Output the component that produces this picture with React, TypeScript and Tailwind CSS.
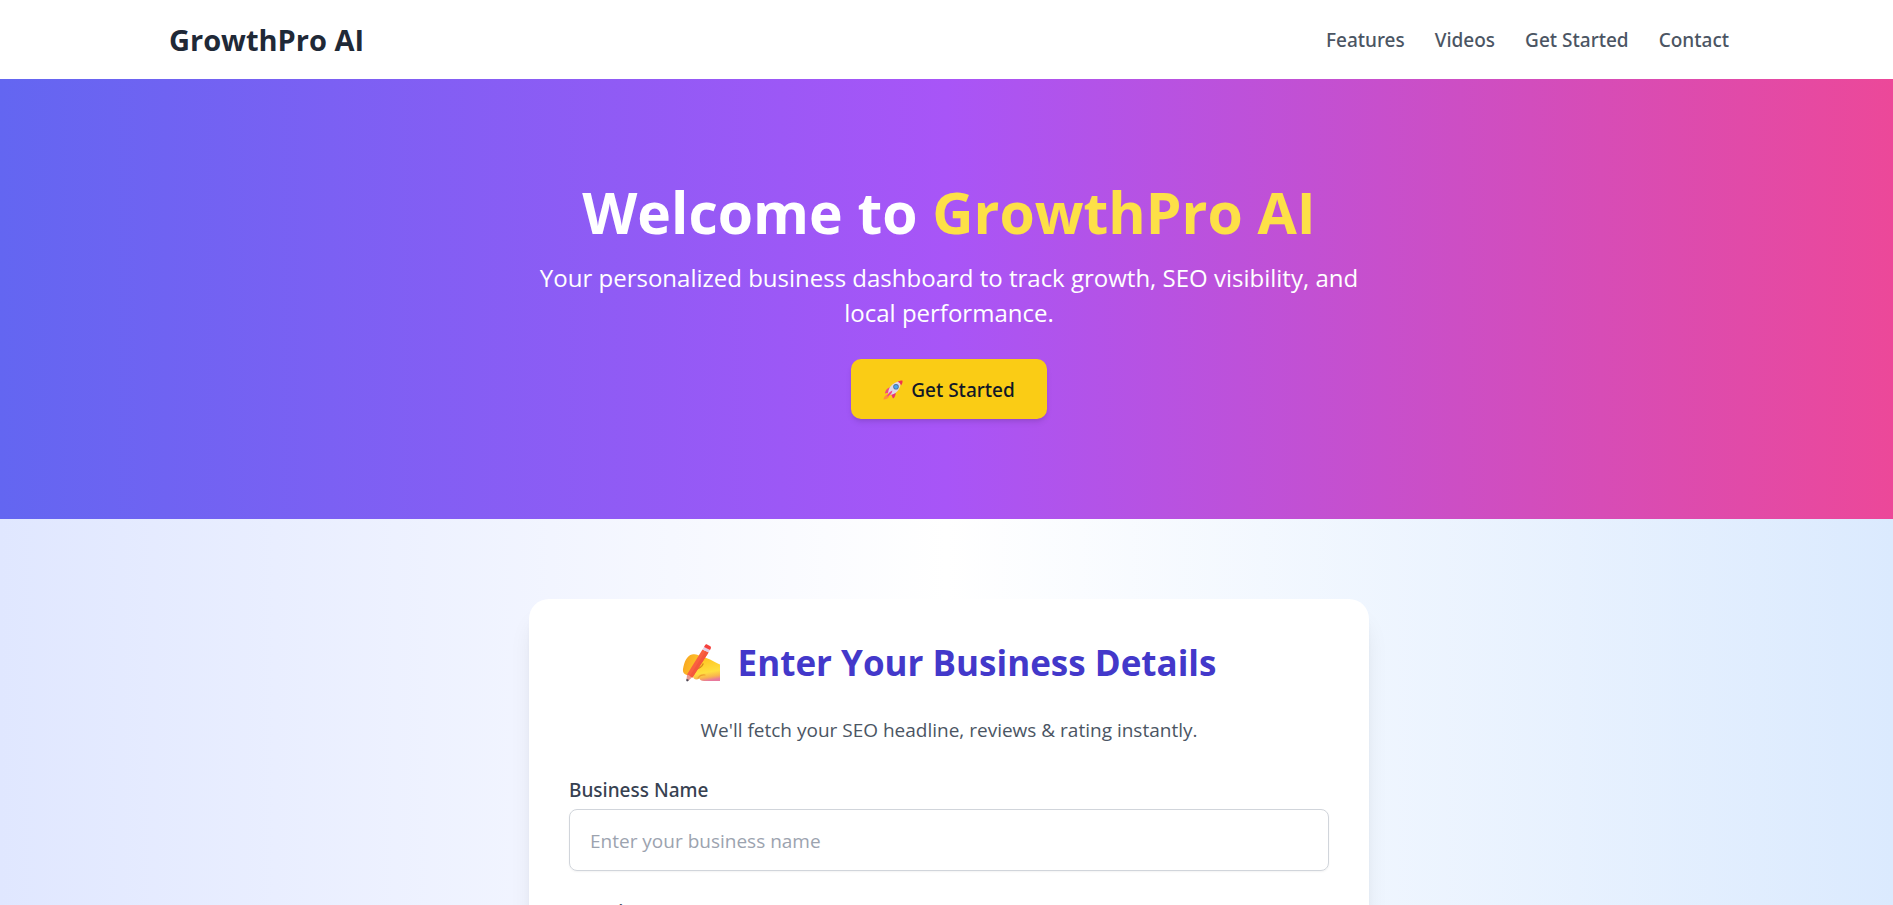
function Rocket() {
  return (
    <svg viewBox="0 0 20 20" className="h-5 w-5" aria-hidden="true">
      <path d="M4.2 14.4 C2.2 15 1 17 .4 19.4 C3 19.4 5.4 18.4 6.2 16.2z" fill="#ff8f3d" />
      <path d="M7.6 7.6 C4.6 7.6 2.4 10 2 13.4 L6.2 12.4z" fill="#ef4a7c" />
      <path d="M12.6 12.2 C13 15.2 11.4 17.8 10 18.6 L8 14z" fill="#e8336d" />
      <path d="M5.2 15 C4.4 9 8.4 2.6 17.6 1 C18.4 9.4 12.4 15.4 5.2 15z" fill="#ddd9e6" />
      <path d="M14.6 1.8 C16 .9 18 .3 19.4 .5 C19.9 2 19.2 4 18 5.4 C17.4 3.6 16.2 2.4 14.6 1.8z" fill="#f0324f" />
      <path d="M9.4 10.4 C7 11.4 4.8 13.6 3.8 16.6 C6.8 15.6 9 13.6 9.4 10.4z" fill="#f0468a" />
      <circle cx="13" cy="6.8" r="2.8" fill="#4e6fa0" />
      <circle cx="13" cy="6.8" r="1.9" fill="#4aa8f0" />
    </svg>
  );
}

function WritingHand() {
  return (
    <svg viewBox="0 0 38 38" className="h-[38px] w-[38px]" aria-hidden="true">
      <defs>
        <linearGradient id="palm" x1="0.3" y1="0" x2="0.5" y2="1">
          <stop offset="0" stopColor="#ffc21f" />
          <stop offset="0.65" stopColor="#ffdf3f" />
          <stop offset="0.85" stopColor="#f9b64e" />
          <stop offset="1" stopColor="#e8799c" />
        </linearGradient>
        <linearGradient id="finger" x1="0" y1="0" x2="1" y2="0.4">
          <stop offset="0" stopColor="#f7a01e" />
          <stop offset="1" stopColor="#ffc92b" />
        </linearGradient>
      </defs>
      <path d="M11 26 C12 18 16 12 22 13.5 C28 14.5 32 18 38 20.5 V37 H22 C19 37 18 36 17.5 34.5 C14 36.5 11 35 11 32z" fill="url(#palm)" />
      <path d="M1 25 C2 18 5 11.5 10 10.5 C13 9.8 17 10.5 18.5 13 C20 16.5 14 18 12 23 C10.5 27 9 31 6 31 C2.5 31 .5 28.5 1 25z" fill="url(#finger)" />
      <path d="M14 25 C17 24.5 20 22.5 21 20" fill="none" stroke="#d98a1c" strokeWidth="1.4" strokeLinecap="round" />
      <path d="M16 34 C18 31 20 30.5 23 31" fill="none" stroke="#f0a02e" strokeWidth="1.2" strokeLinecap="round" />
      <path d="M5 30.5 L10.5 33 L6 37 L4.5 36.5z" fill="#e89a90" />
      <path d="M4.5 34.8 L7 36 L5.4 37.4 L4.3 37z" fill="#4a4a58" />
      <path d="M5 30.5 L20.5 5.5 L26.5 8.5 L10.5 33.5z" fill="#fa6040" />
      <path d="M7.8 32 L23.5 7 L26.5 8.5 L10.5 33.5z" fill="#f4573c" />
      <path d="M20.5 5.5 L22 3 L28 6 L26.5 8.5z" fill="#e4cfe6" />
      <path d="M22 3 L23 1.2 C23.6 .2 24.6 .2 25.5 .7 L28 2 C29 2.6 29.2 3.6 28.8 4.6 L28 6z" fill="#f5413d" />
    </svg>
  );
}

export default function App() {
  return (
    <div className="h-screen overflow-hidden bg-white font-['Open_Sans','Noto_Sans',sans-serif] text-[19px] leading-[32px]">
      <header className="bg-white pl-[5px]">
        <div className="mx-auto flex max-w-[1600px] items-center justify-between px-5 py-5">
          <a href="#" className="text-[29px] leading-[39px] font-bold text-[#1f2937]">GrowthPro AI</a>
          <nav className="flex gap-[30px] font-['Noto_Sans',sans-serif] font-medium text-[#4b5563]">
            <a href="#features">Features</a>
            <a href="#videos">Videos</a>
            <a href="#start">Get Started</a>
            <a href="#contact">Contact</a>
          </nav>
        </div>
      </header>
      <section className="bg-linear-to-r/srgb from-[#6366f1] via-[#a855f7] to-[#ec4899] py-[100px] pr-5 pl-[25px] text-center text-white">
        <h1 className="mb-[15px] text-[57px] leading-[66px] font-bold">
          Welcome to <span className="text-[#fde047]">GrowthPro AI</span>
        </h1>
        <p className="mx-auto mb-[29px] max-w-[840px] text-[24px] leading-[35px]">
          Your personalized business dashboard to track growth, SEO visibility, and local performance.
        </p>
        <button className="inline-flex items-center gap-2 rounded-[10px] bg-[#facc15] px-8 pt-[15px] pb-[13px] align-top font-['Noto_Sans',sans-serif] font-medium text-[#111827] shadow-md">
          <Rocket />
          Get Started
        </button>
      </section>
      <section id="start" className="bg-linear-to-r/srgb from-[#e0e7ff] via-white to-[#dbeafe] py-20 pr-5 pl-[25px]">
        <form className="mx-auto max-w-[840px] rounded-[20px] bg-white p-10 shadow-xl">
          <h2 className="mb-[27px] flex items-center justify-center gap-[18px] text-[35px] leading-[48px] font-bold text-[#4338ca]">
            <WritingHand />
            Enter Your Business Details
          </h2>
          <p className="mb-[28px] text-center text-[#4b5563]">We'll fetch your SEO headline, reviews &amp; rating instantly.</p>
          <div className="flex flex-col gap-[25px]">
            <div>
              <label htmlFor="name" className="mb-[3px] block font-['Noto_Sans',sans-serif] font-medium text-[#374151]">Business Name</label>
              <input id="name" placeholder="Enter your business name" className="block w-full rounded-[8px] border border-[#d1d5db] px-5 pt-[15px] pb-[13px] shadow-xs placeholder:text-[#9ca3af]" />
            </div>
            <div>
              <label htmlFor="location" className="mb-[3px] block font-['Noto_Sans',sans-serif] font-medium text-[#374151]">Location</label>
              <input id="location" placeholder="Enter your location" className="block w-full rounded-[8px] border border-[#d1d5db] px-5 pt-[15px] pb-[13px] shadow-xs placeholder:text-[#9ca3af]" />
            </div>
          </div>
        </form>
      </section>
    </div>
  );
}
